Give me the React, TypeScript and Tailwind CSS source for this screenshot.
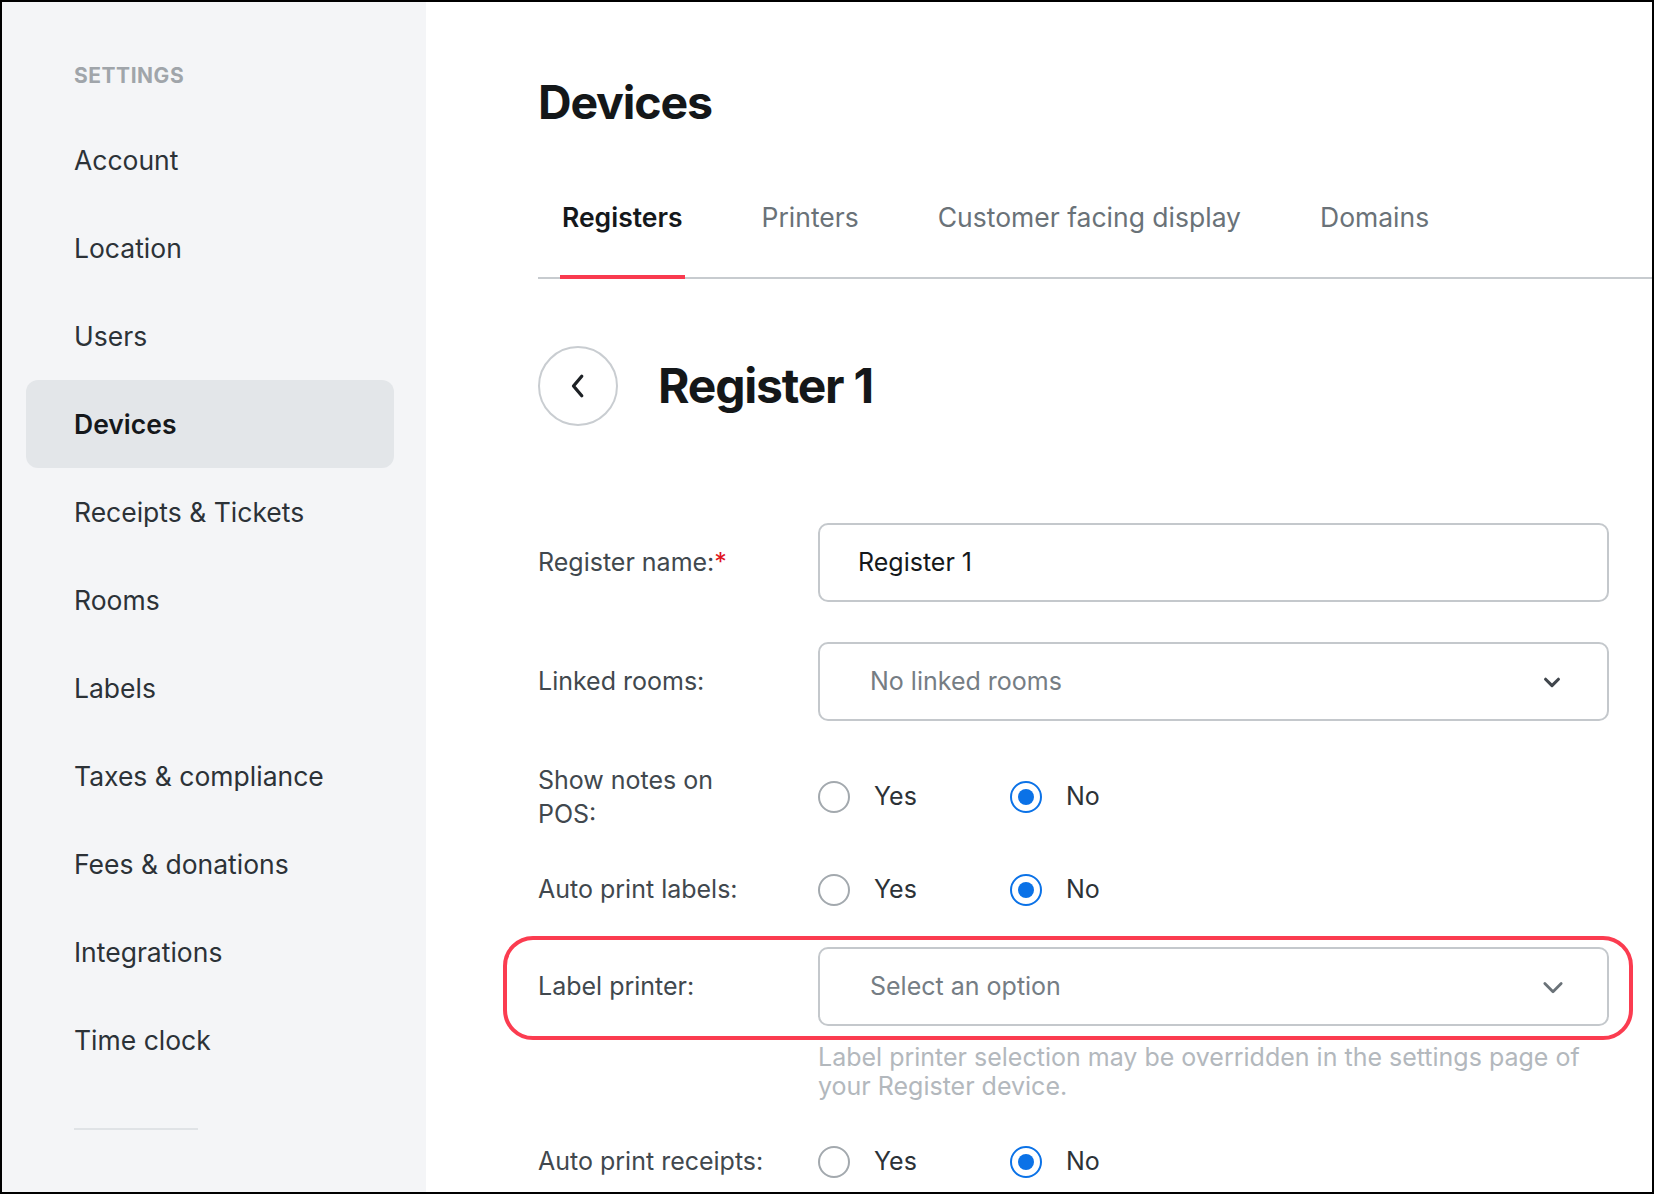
import React from 'react';

const navItems = [
  'Account',
  'Location',
  'Users',
  'Devices',
  'Receipts & Tickets',
  'Rooms',
  'Labels',
  'Taxes & compliance',
  'Fees & donations',
  'Integrations',
  'Time clock',
];

const tabs = ['Registers', 'Printers', 'Customer facing display', 'Domains'];

function Chevron({ className }: { className?: string }) {
  return (
    <svg viewBox="0 0 24 24" fill="none" stroke="currentColor" strokeLinecap="round" strokeLinejoin="round" className={className}>
      <path d="M5 9l7 7 7-7" />
    </svg>
  );
}

function Radio({ checked }: { checked: boolean }) {
  return checked ? (
    <span className="w-8 h-8 rounded-full border-2 border-[#0b72e7] flex items-center justify-center">
      <span className="w-4 h-4 rounded-full bg-[#0b72e7]" />
    </span>
  ) : (
    <span className="w-8 h-8 rounded-full border-2 border-[#a3a9ae]" />
  );
}

function YesNo() {
  return (
    <div className="flex items-center">
      <div className="w-[192px] flex items-center gap-6">
        <Radio checked={false} />
        <span className="text-[25px] text-[#2c3237]">Yes</span>
      </div>
      <div className="flex items-center gap-6">
        <Radio checked />
        <span className="text-[25px] text-[#2c3237]">No</span>
      </div>
    </div>
  );
}

export default function App() {
  return (
    <div
      className="w-[1654px] h-[1194px] border-2 border-black overflow-hidden flex bg-white"
      style={{ fontFamily: 'Inter, "Noto Sans", sans-serif' }}
    >
      {/* Sidebar */}
      <aside className="w-[424px] shrink-0 bg-[#f4f5f7] pt-[50px]">
        <div className="h-12 flex items-center pl-[72px] text-[21px] font-bold tracking-wide text-[#a0a5aa]">
          SETTINGS
        </div>
        <nav className="mt-4 flex flex-col">
          {navItems.map(item => (
            <div
              key={item}
              className={`ml-6 mr-8 h-[88px] flex items-center pl-12 pt-[2px] rounded-xl text-[26.5px]
                ${item === 'Devices'
                  ? 'bg-[#e3e6e9] font-semibold text-[#15181b]'
                  : 'text-[#2c3237]'}`}
            >
              {item}
            </div>
          ))}
        </nav>
        <div className="ml-[72px] mt-[44px] w-[124px] h-[2px] bg-[#e0e3e6]" />
      </aside>

      {/* Main */}
      <main className="flex-1 pl-[112px] pt-[72px]">
        <h1 className="text-[46.5px] leading-[56px] font-bold text-[#141719] tracking-tight">Devices</h1>

        <div className="mt-[68px] flex gap-[75px] pl-[22px] border-b-2 border-[#c7cbcf]">
          {tabs.map(tab => (
            <div
              key={tab}
              className={`-mb-[2px] px-[2px] leading-[36px] pt-[1px] pb-[40px] border-b-4 text-[26.5px]
                ${tab === 'Registers'
                  ? 'border-[#f93a4f] font-semibold text-[#15181b]'
                  : 'border-transparent text-[#6a7278]'}`}
            >
              {tab}
            </div>
          ))}
        </div>

        <div className="pr-[43px]">
          {/* Header */}
          <div className="mt-[67px] h-20 flex items-center gap-10">
            <button className="w-20 h-20 rounded-full border-2 border-[#c9cdd1] flex items-center justify-center text-[#1d2125]">
              <svg viewBox="0 0 24 24" className="w-9 h-9" fill="none" stroke="currentColor" strokeWidth={2.2} strokeLinecap="round" strokeLinejoin="round">
                <path d="M14.5 5.5 9 12l5.5 6.5" />
              </svg>
            </button>
            <h2 className="text-[48px] font-bold text-[#141719] tracking-tight">Register 1</h2>
          </div>

          {/* Register name */}
          <div className="mt-[97px] flex items-center">
            <div className="w-[280px] text-[25px] text-[#41484e]">
              Register name:<span className="text-[#e0141e]">*</span>
            </div>
            <div className="flex-1 h-[79px] border-2 border-[#c4c8cc] rounded-[10px] flex items-center pl-[38px] text-[25px] text-[#15181b]">
              Register 1
            </div>
          </div>

          {/* Linked rooms */}
          <div className="mt-[40px] flex items-center">
            <div className="w-[280px] text-[25px] text-[#41484e]">Linked rooms:</div>
            <div className="flex-1 h-[79px] border-2 border-[#c4c8cc] rounded-[10px] flex items-center justify-between pl-[50px] pr-[44px]">
              <span className="text-[25px] text-[#757d84]">No linked rooms</span>
              <Chevron className="w-[22px] h-[22px] text-[#40464c] [stroke-width:3.4]" />
            </div>
          </div>

          {/* Show notes on POS */}
          <div className="mt-[42px] flex items-center">
            <div className="w-[280px] text-[25px] leading-[34px] text-[#41484e]">
              Show notes on<br />POS:
            </div>
            <YesNo />
          </div>

          {/* Auto print labels */}
          <div className="mt-[39px] h-10 flex items-center">
            <div className="w-[280px] text-[25px] text-[#41484e]">Auto print labels:</div>
            <YesNo />
          </div>

          {/* Label printer */}
          <div className="relative mt-[37px] flex items-center">
            <div className="absolute -left-[35px] -right-[24px] -top-[11px] -bottom-[14px] border-4 border-[#fb3c50] rounded-[30px] pointer-events-none" />
            <div className="w-[280px] text-[25px] text-[#41484e]">Label printer:</div>
            <div className="flex-1 h-[79px] border-2 border-[#c4c8cc] rounded-[10px] flex items-center justify-between pl-[50px] pr-[40px]">
              <span className="text-[25px] text-[#757d84]">Select an option</span>
              <Chevron className="w-[28px] h-[28px] text-[#6a7278] [stroke-width:2.4]" />
            </div>
          </div>
          <p className="mt-[17px] ml-[280px] text-[25px] leading-[29px] text-[#b3b8bd]">
            Label printer selection may be overridden in the settings page of your Register device.
          </p>

          {/* Auto print receipts */}
          <div className="mt-[41px] h-10 flex items-center">
            <div className="w-[280px] text-[25px] text-[#41484e]">Auto print receipts:</div>
            <YesNo />
          </div>
        </div>
      </main>
    </div>
  );
}
